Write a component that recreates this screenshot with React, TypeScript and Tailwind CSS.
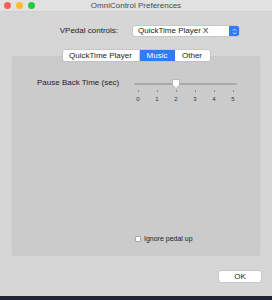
import React from "react";

const TICKS = [0, 1, 2, 3, 4, 5];

function TrafficLights() {
  return (
    <div className="absolute left-[4px] top-[2px] flex gap-[5px]">
      <span className="h-[7px] w-[7px] rounded-full bg-[#fc5f57]" />
      <span className="h-[7px] w-[7px] rounded-full bg-[#fdbc2e]" />
      <span className="h-[7px] w-[7px] rounded-full bg-[#28c840]" />
    </div>
  );
}

function Slider() {
  return (
    <div className="relative h-[22px] w-[103px]">
      <div className="absolute left-0 right-0 top-[4px] h-[2px] rounded-full bg-[#a9a9a9]" />
      <svg
        className="absolute left-[38px] top-0"
        width="8"
        height="10"
        viewBox="0 0 8 10"
      >
        <path
          d="M1 0.5 H7 Q7.5 0.5 7.5 1 V6 L4 9.5 L0.5 6 V1 Q0.5 0.5 1 0.5 Z"
          fill="#ffffff"
          stroke="#a0a0a0"
          strokeWidth="0.6"
        />
      </svg>
      <div className="absolute left-0 right-0 top-[11px] flex justify-between px-[2px]">
        {TICKS.map((t) => (
          <div key={t} className="flex w-[4px] flex-col items-center">
            <span className="h-[2px] w-px bg-[#8a8a8a]" />
            <span className="mt-[4px] text-[6px] leading-none text-[#333]">
              {t}
            </span>
          </div>
        ))}
      </div>
    </div>
  );
}

export default function App() {
  return (
    <div
      className="flex h-[300px] w-[272px] flex-col bg-[#d6d6d6] text-[#222]"
      style={{ fontFamily: '"Liberation Sans", Arial, sans-serif' }}
    >
      <div className="relative flex h-[12px] items-center justify-center bg-[#e2e2e2] border-b border-[#d0d0d0]">
        <TrafficLights />
        <span className="text-[8px] leading-none text-[#4a4a4a]">
          OmniControl Preferences
        </span>
      </div>

      <div className="mt-[14px] flex h-[10px] items-center">
        <span className="w-[118px] text-right text-[8px] leading-none">
          VPedal controls:
        </span>
        <div className="ml-[15px] flex h-[10px] w-[106px] items-center rounded-[2px] bg-white shadow-[0_0_0_0.5px_#b8b8b8]">
          <span className="flex-1 pl-[5px] text-[8px] leading-none">
            QuickTime Player X
          </span>
          <div className="flex h-[10px] w-[10px] flex-col items-center justify-center rounded-r-[2px] bg-[#2f7cf6]">
            <svg width="5" height="7" viewBox="0 0 5 7">
              <path
                d="M1 2.5 L2.5 1 L4 2.5 M1 4.5 L2.5 6 L4 4.5"
                fill="none"
                stroke="#fff"
                strokeWidth="0.8"
              />
            </svg>
          </div>
        </div>
      </div>

      <div className="relative z-10 mt-[14px] flex h-[11px] justify-center">
        <div className="flex overflow-hidden rounded-[2px] bg-white text-[8px] leading-none shadow-[0_0_0_0.5px_#b8b8b8]">
          <span className="flex w-[77px] items-center justify-center border-r border-[#d0d0d0]">
            QuickTime Player
          </span>
          <span className="flex w-[35px] items-center justify-center bg-[#2f7cf6] text-white">
            Music
          </span>
          <span className="flex w-[35px] items-center justify-center">
            Other
          </span>
        </div>
      </div>

      <div className="mx-[12px] -mt-[5px] flex h-[200px] flex-col rounded-[2px] border border-[#c8c8c8] bg-[#cbcbcb]">
        <div className="mt-[22px] flex">
          <span className="ml-[24px] w-[97px] text-[8px] leading-none">
            Pause Back Time (sec)
          </span>
          <Slider />
        </div>
        <div className="mt-auto mb-[13px] flex items-center pl-[122px]">
          <span className="h-[6px] w-[6px] rounded-[1px] border border-[#a8a8a8] bg-white" />
          <span className="ml-[3px] text-[7px] leading-none">
            Ignore pedal up
          </span>
        </div>
      </div>

      <div className="mt-[15px] flex justify-end pr-[11px]">
        <button className="flex h-[11px] w-[42px] items-center justify-center rounded-[2px] bg-white text-[8px] leading-none shadow-[0_0_0_0.5px_#b8b8b8]">
          OK
        </button>
      </div>

      <div className="mt-auto h-[4px] bg-[#1d2632]" />
    </div>
  );
}
